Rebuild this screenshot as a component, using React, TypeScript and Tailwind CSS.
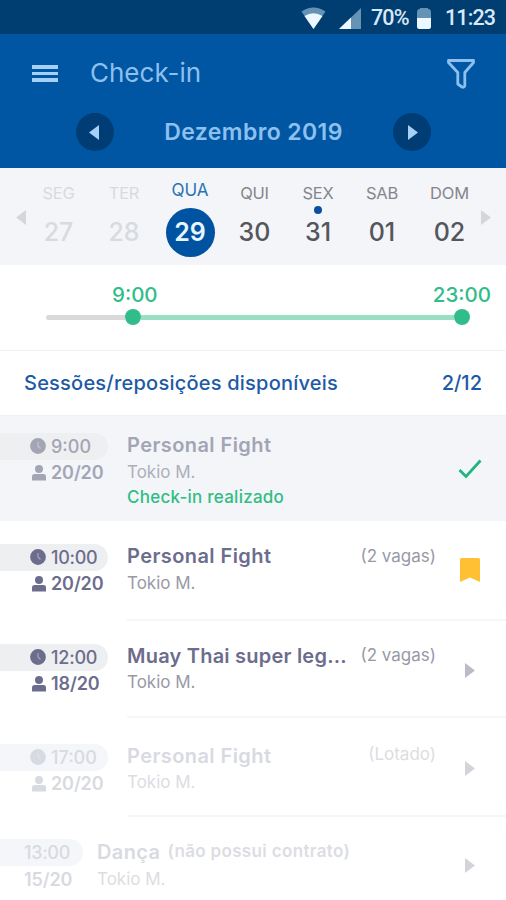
import { clsx } from 'clsx';

interface Day {
  label: string;
  number: string;
  state?: 'past' | 'selected' | 'marked';
}

interface Session {
  time: string;
  timeClass?: string;
  spots: string;
  title: string;
  titleClass?: string;
  note?: string;
  noteClass?: string;
  status?: string;
  action: 'check' | 'bookmark' | 'arrow';
  tone: 'done' | 'open' | 'disabled';
  compact?: boolean;
  rowClass: string;
  bodyClass: string;
  actionClass: string;
}

const days: Day[] = [
  { label: 'SEG', number: '27', state: 'past' },
  { label: 'TER', number: '28', state: 'past' },
  { label: 'QUA', number: '29', state: 'selected' },
  { label: 'QUI', number: '30' },
  { label: 'SEX', number: '31', state: 'marked' },
  { label: 'SAB', number: '01' },
  { label: 'DOM', number: '02' },
];

const sessions: Session[] = [
  {
    time: '9:00',
    timeClass: '-mt-px',
    spots: '20/20',
    title: 'Personal Fight',
    titleClass: 'tracking-[0.42px]',
    status: 'Check-in realizado',
    action: 'check',
    tone: 'done',
    rowClass: 'h-[105px] pt-[17px] bg-[#f3f5f9]',
    bodyClass: '-mt-px gap-[2px]',
    actionClass: 'mt-[26px]',
  },
  {
    time: '10:00',
    timeClass: 'tracking-[-0.3px]',
    spots: '20/20',
    title: 'Personal Fight',
    titleClass: 'tracking-[0.42px]',
    note: '(2 vagas)',
    noteClass: 'mt-[2px]',
    action: 'bookmark',
    tone: 'open',
    rowClass: 'h-[100px] pt-[23px]',
    bodyClass: '-mt-px gap-[2px]',
    actionClass: 'mt-[14px]',
  },
  {
    time: '12:00',
    timeClass: 'tracking-[-0.2px]',
    spots: '18/20',
    title: 'Muay Thai super leg...',
    titleClass: 'tracking-[0.22px]',
    note: '(2 vagas)',
    noteClass: 'mt-px',
    action: 'arrow',
    tone: 'open',
    rowClass: 'h-[97px] pt-[23px]',
    bodyClass: '-mt-px gap-px',
    actionClass: 'mt-[19px]',
  },
  {
    time: '17:00',
    timeClass: '-mt-px',
    spots: '20/20',
    title: 'Personal Fight',
    titleClass: 'tracking-[0.42px]',
    note: '(Lotado)',
    noteClass: '-mt-px',
    action: 'arrow',
    tone: 'disabled',
    rowClass: 'h-[99px] pt-[26px]',
    bodyClass: '-mt-px gap-px',
    actionClass: 'mt-[17px]',
  },
  {
    time: '13:00',
    timeClass: 'tracking-[-0.3px]',
    spots: '15/20',
    title: 'Dança',
    titleClass: 'tracking-[0.4px]',
    note: '(não possui contrato)',
    noteClass: 'mt-px font-semibold tracking-[0.34px]',
    action: 'arrow',
    tone: 'disabled',
    compact: true,
    rowClass: 'h-[90px] pt-[22px]',
    bodyClass: 'gap-[2px]',
    actionClass: 'mt-[19px]',
  },
];

const textTone = {
  done: 'text-[#a3a5b4]',
  open: 'text-[#6c6d8d]',
  disabled: 'text-[#d8dae1]',
};

const lightTone = {
  done: 'text-[#adafb9]',
  open: 'text-[#9899a6]',
  disabled: 'text-[#dcdde2]',
};

function Triangle({ left, className }: { left?: boolean; className?: string }) {
  return (
    <svg viewBox="0 0 10 15" className={clsx('h-[15px] w-[10px]', className)} fill="currentColor">
      <path d={left ? 'M10 0V15L0 7.5Z' : 'M0 0V15L10 7.5Z'} />
    </svg>
  );
}

function StatusBar() {
  return (
    <div className="flex h-[34px] items-center bg-[#003d70] pl-[301px] font-['Roboto',sans-serif] text-[21.500px] leading-[34px] font-medium text-[#d9e9f8]">
      <svg viewBox="0 0 25 22" className="mt-[1px] h-[22px] w-[25px] shrink-0">
        <path d="M0.500 4.500Q12.500 -3.500 24.500 4.500L12.500 22Z" fill="#6593b6" />
        <path d="M3.500 9Q12.500 3.500 21.500 9L12.500 22Z" fill="#ecf7ff" />
      </svg>
      <svg viewBox="0 0 22 21" className="mt-[3px] ml-[13px] h-[21px] w-[22px] shrink-0">
        <path d="M0 21L22 0V21Z" fill="#6593b6" />
        <path d="M0 21L12 9.500V21Z" fill="#ecf7ff" />
      </svg>
      <span className="mt-px ml-[10px] w-[37px] tracking-[-0.9px] whitespace-nowrap">70%</span>
      <svg viewBox="0 0 14 21" className="mt-[2px] ml-[9px] h-[21px] w-[14px] shrink-0">
        <path d="M3 0H11V1H12Q14 1.500 14 4V10H0V4Q0 1.500 2 1H3Z" fill="#6593b6" />
        <path d="M0 10H14V18.500Q14 21 11.500 21H2.500Q0 21 0 18.500Z" fill="#ecf7ff" />
      </svg>
      <span className="mt-px ml-[14px] tracking-[-0.9px] whitespace-nowrap">11:23</span>
    </div>
  );
}

function Header() {
  return (
    <header className="h-[134px] bg-[#0056a2] text-[#8dc0ef]">
      <div className="flex h-[76px] items-center pr-[31px] pl-[32px]">
        <div className="mt-[3px] flex w-[26px] flex-col gap-[3px]">
          <span className="h-[3.500px] bg-[#a5d0f8]" />
          <span className="h-[3.500px] bg-[#a5d0f8]" />
          <span className="h-[3.500px] bg-[#a5d0f8]" />
        </div>
        <h1 className="mt-px ml-[32px] text-[26px] leading-[30px] font-[370]">Check-in</h1>
        <svg
          viewBox="0 0 28 30"
          className="mt-[3px] ml-auto h-[30px] w-[28px]"
          fill="none"
          stroke="currentColor"
          strokeWidth="2.800"
          strokeLinejoin="round"
        >
          <path d="M1.500 1.500H26.500V3.500L17.800 13.500V27Q17 28.800 15 28L10.800 25V13.500L1.500 3.500Z" />
        </svg>
      </div>
      <div className="flex h-[44px] items-center justify-between pr-[75px] pl-[76px]">
        <button className="flex size-[38px] items-center justify-center rounded-full bg-[#003d74] pr-[3px] text-[#a5d0f8]">
          <Triangle left />
        </button>
        <span className="text-[23px] font-semibold tracking-[0.4px]">Dezembro 2019</span>
        <button className="flex size-[38px] items-center justify-center rounded-full bg-[#003d74] pl-px text-[#a5d0f8]">
          <Triangle />
        </button>
      </div>
    </header>
  );
}

function DayPicker() {
  return (
    <div className="flex h-[97px] bg-[#f3f5f9] pl-[16px]">
      <Triangle left className="mt-[42px] text-[#d5d6da]" />
      <div className="grid grid-cols-[65px_66px_66px_63px_64px_64px_71px]">
        {days.map((day) => (
          <div
            key={day.label}
            className={clsx(
              'relative flex flex-col items-center',
              day.state === 'past' ? 'text-[#d9dade]' : 'text-[#55565b]'
            )}
          >
            <span
              className={clsx(
                'leading-[20px]',
                day.state === 'selected'
                  ? 'mt-[12px] mb-[3px] text-[17px] text-[#2b72b3]'
                  : 'mt-[15px] text-[16.500px] tracking-[-0.2px]',
                day.state !== 'past' && day.state !== 'selected' && 'text-[#85868b]'
              )}
            >
              {day.label}
            </span>
            <span
              className={clsx(
                'mt-[5px] flex size-[49px] items-center justify-center rounded-full pt-px text-[25px] font-medium',
                day.state === 'selected' && 'bg-[#0053a1] font-semibold text-[#e6f5ff]'
              )}
            >
              {day.number}
            </span>
            {day.state === 'marked' && (
              <span className="absolute top-[38px] size-[8px] rounded-full bg-[#0b4fa3]" />
            )}
          </div>
        ))}
      </div>
      <Triangle className="mt-[42px] -ml-[4px] text-[#d5d6da]" />
    </div>
  );
}

function TimeRange() {
  return (
    <div className="h-[85px] pt-[19px]">
      <div className="flex justify-between pr-[15px] pl-[112px] text-[20.500px] leading-[21px] font-medium text-[#31bd8a]">
        <span>9:00</span>
        <span>23:00</span>
      </div>
      <div className="mt-[4px] ml-[46px] flex items-center">
        <span className="h-[5px] w-[79px] rounded-l-full bg-[#d9d9d9]" />
        <span className="size-[16px] rounded-full bg-[#31bd8a]" />
        <span className="h-[5px] w-[313px] bg-[#99dfc4]" />
        <span className="size-[16px] rounded-full bg-[#31bd8a]" />
      </div>
    </div>
  );
}

function SessionRow({ session }: { session: Session }) {
  const { tone, compact } = session;

  return (
    <li className={clsx('flex', session.rowClass, textTone[tone])}>
      <div className={clsx('shrink-0 text-[18px]', compact ? 'w-[97px]' : 'w-[127px]')}>
        <div
          className={clsx(
            'flex h-[27px] items-center rounded-r-full',
            compact ? 'w-[83px] pl-[24px]' : 'w-[108px] pl-[30px]',
            tone === 'disabled' ? 'bg-[#f4f6f9]' : 'bg-[#eeeff1]'
          )}
        >
          {!compact && (
            <svg viewBox="0 0 16 16" className="-mt-px mr-[5px] size-[16px] shrink-0">
              <circle cx="8" cy="8" r="7.900" fill="currentColor" />
              <path d="M8 4V8L10.500 10.500" fill="none" stroke="#eeeff1" strokeOpacity="0.45" strokeWidth="1.200" />
            </svg>
          )}
          <span className={clsx('font-medium', session.timeClass)}>{session.time}</span>
        </div>
        <div
          className={clsx(
            'flex h-[25px] items-center font-semibold tracking-[-0.1px]',
            compact ? 'mt-px pl-[24px]' : 'pl-[32px]'
          )}
        >
          {!compact && (
            <svg viewBox="0 0 14 16" className="mr-[5px] h-[16px] w-[14px] shrink-0" fill="currentColor">
              <circle cx="7" cy="4" r="4" />
              <path d="M0 15.500V11.500Q0 9 2.500 9H11.500Q14 9 14 11.500V15.500Z" />
            </svg>
          )}
          <span>{session.spots}</span>
        </div>
      </div>
      <div
        className={clsx(
          'flex flex-1 justify-between',
          tone !== 'done' && !compact && 'border-b-2 border-[#f5f6f9]'
        )}
      >
        <div className={clsx('flex shrink-0 flex-col', session.bodyClass)}>
          <div className={clsx('flex h-[25px] items-center', !compact && 'w-[309px] justify-between')}>
            <h2 className={clsx('text-[20px] font-semibold whitespace-nowrap', session.titleClass)}>
              {session.title}
            </h2>
            {session.note && (
              <span
                className={clsx(
                  'text-[17px] whitespace-nowrap',
                  compact && 'ml-[7px]',
                  lightTone[tone],
                  session.noteClass
                )}
              >
                {session.note}
              </span>
            )}
          </div>
          <p className={clsx('text-[17px] leading-[26px]', lightTone[tone])}>Tokio M.</p>
          {session.status && (
            <p className="-mt-[2px] text-[17px] leading-[25px] font-medium tracking-[0.25px] text-[#31bd83]">
              {session.status}
            </p>
          )}
        </div>
        <div className={clsx('flex w-[70px] items-start justify-center pr-[2px]', session.actionClass)}>
          {session.action === 'check' && (
            <svg viewBox="0 0 24 20" className="h-[20px] w-[24px]" fill="none" stroke="#24b57f" strokeWidth="2.800">
              <path d="M1.500 11L8 17.500L22.500 1.500" />
            </svg>
          )}
          {session.action === 'bookmark' && (
            <svg viewBox="0 0 20 24" className="h-[24px] w-[20px]" fill="#ffc033">
              <path d="M0 1.500Q0 0 1.500 0H18.500Q20 0 20 1.500V24L10 19.500L0 24Z" />
            </svg>
          )}
          {session.action === 'arrow' && (
            <Triangle className={tone === 'disabled' ? 'text-[#d3d4da]' : 'text-[#babbc7]'} />
          )}
        </div>
      </div>
    </li>
  );
}

export default function App() {
  return (
    <div className="h-[900px] w-[506px] overflow-hidden bg-white font-['Inter',sans-serif]">
      <StatusBar />
      <Header />
      <DayPicker />
      <TimeRange />
      <div className="flex h-[66px] items-center justify-between border-y border-[#f1f2f4] pr-[24px] pl-[24px] text-[20px] font-medium text-[#1d5aa6]">
        <h2 className="tracking-[0.22px]">Sessões/reposições disponíveis</h2>
        <span>2/12</span>
      </div>
      <ul>
        {sessions.map((session) => (
          <SessionRow key={session.time} session={session} />
        ))}
      </ul>
    </div>
  );
}
